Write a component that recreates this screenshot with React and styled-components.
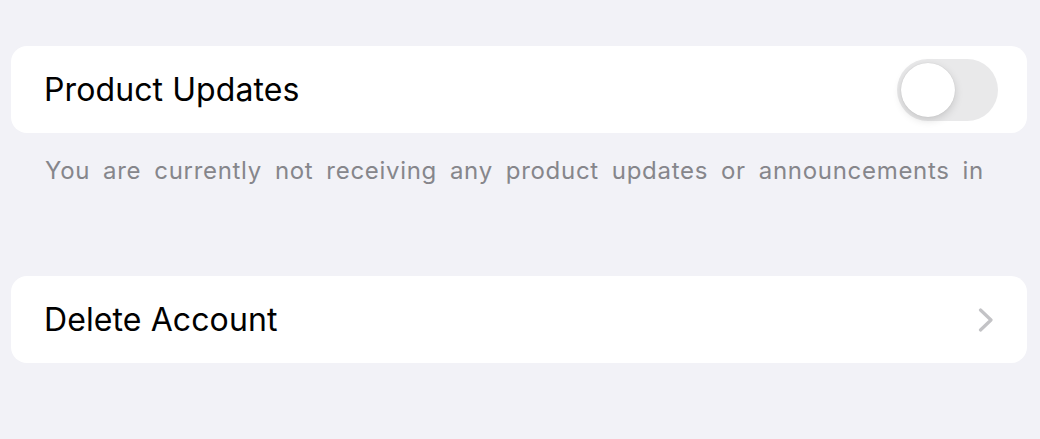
import styled, { createGlobalStyle } from "styled-components";

const GlobalStyle = createGlobalStyle`
  body {
    margin: 0;
    background: #f2f2f7;
    font-family: Inter, "Noto Sans", sans-serif;
    -webkit-font-smoothing: antialiased;
  }
`;

function Toggle({ on }) {
  return (
    <Track $on={on}>
      <Knob $on={on} />
    </Track>
  );
}

function Chevron() {
  return (
    <ChevronIcon width="16" height="24" viewBox="0 0 16 24" fill="none">
      <path
        d="M2.5 2 L13 12 L2.5 22"
        stroke="#c3c3c6"
        strokeWidth="3.2"
        strokeLinecap="round"
        strokeLinejoin="round"
      />
    </ChevronIcon>
  );
}

function App() {
  return (
    <>
      <GlobalStyle />
      <Page>
        <Section>
          <Card>
            <Label>Product Updates</Label>
            <Toggle on={false} />
          </Card>
          <Footer>
            You are currently not receiving any product updates or
            announcements in
          </Footer>
        </Section>

        <Section>
          <Card>
            <Label>Delete Account</Label>
            <Chevron />
          </Card>
        </Section>
      </Page>
    </>
  );
}

const Page = styled.div`
  padding: 46px 13px 0 11px;
  display: flex;
  flex-direction: column;
  row-gap: 89px;
`;

const Section = styled.section`
  display: flex;
  flex-direction: column;
`;

const Card = styled.div`
  height: 87px;
  background: #fff;
  border-radius: 16px;
  padding: 0 29px 0 33px;
  display: flex;
  align-items: center;
  justify-content: space-between;
`;

const Label = styled.span`
  font-size: 32px;
  color: #000;
  letter-spacing: 0.1px;
`;

const ChevronIcon = styled.svg`
  margin-right: 4px;
`;

const Track = styled.div`
  width: 101px;
  height: 62px;
  border-radius: 31px;
  background: ${(p) => (p.$on ? "#34c759" : "#e9e9ea")};
  padding: 4px;
  box-sizing: border-box;
  display: flex;
  justify-content: ${(p) => (p.$on ? "flex-end" : "flex-start")};
  align-items: center;
`;

const Knob = styled.div`
  width: 54px;
  height: 54px;
  border-radius: 50%;
  background: #fff;
  box-shadow: 0 3px 8px rgba(0, 0, 0, 0.15), 0 0 1px rgba(0, 0, 0, 0.16);
`;

const Footer = styled.p`
  margin: 0;
  padding: 22px 43px 0 34px;
  font-size: 24px;
  line-height: 32px;
  color: #86868b;
  text-align: justify;
  text-align-last: justify;
  letter-spacing: 0.7px;
`;

export default App;
